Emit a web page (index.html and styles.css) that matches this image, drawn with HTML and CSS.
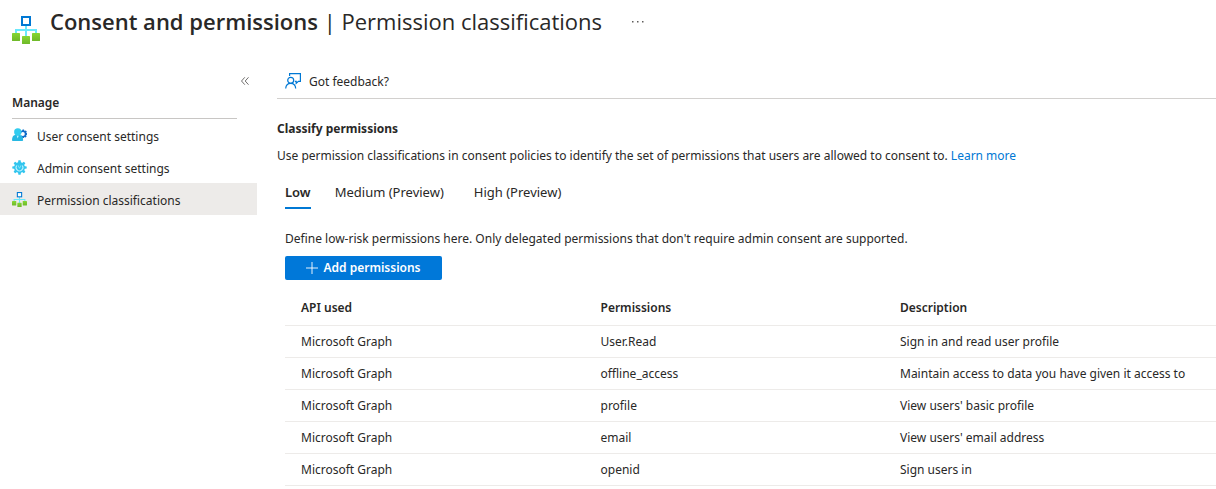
FILE: index.html
```html
<!DOCTYPE html>
<html lang="en">
<head>
<meta charset="utf-8">
<meta name="viewport" content="width=device-width, initial-scale=1">
<title>Consent and permissions | Permission classifications</title>
<link rel="stylesheet" href="styles.css">
</head>
<body>
<svg class="defs" aria-hidden="true">
  <defs>
    <linearGradient id="leaf" x1="0" y1="0" x2="0" y2="1">
      <stop offset="0" stop-color="#86d633"/><stop offset="1" stop-color="#6fb92a"/>
    </linearGradient>
    <symbol id="hierarchy" viewBox="0 0 28 28">
      <path d="M14 9v13M4 18v-4h20v4" fill="none" stroke="#6ae8fb" stroke-width="2"/>
      <rect x="10" y="1" width="8" height="8" fill="#fff" stroke="#0078d4" stroke-width="2"/>
      <rect x="0" y="17" width="8" height="8" rx="0.6" fill="url(#leaf)"/>
      <rect x="10" y="20" width="8" height="8" rx="0.6" fill="url(#leaf)"/>
      <rect x="20" y="17" width="8" height="8" rx="0.6" fill="url(#leaf)"/>
    </symbol>
  </defs>
</svg>

<header class="page-header">
  <svg class="page-icon" aria-hidden="true"><use href="#hierarchy"/></svg>
  <h1 class="page-title"><span class="page-name">Consent and permissions</span> | Permission classifications</h1>
  <button class="more" type="button" aria-label="More options">
    <svg width="12" height="2" viewBox="0 0 12 2" aria-hidden="true"><path d="M0 0h1.500v1.500H0zM5 0h1.500v1.500H5zM10 0h1.500v1.500H10z" fill="#605e5c"/></svg>
  </button>
</header>

<div class="layout">
  <nav class="sidebar" aria-label="Manage">
    <button class="collapse" type="button" aria-label="Collapse menu">
      <svg width="8" height="8" viewBox="0 0 8 8" aria-hidden="true"><path d="M3.800.3L.5 4l3.300 3.700M7.500.3L4.200 4l3.300 3.700" fill="none" stroke="#605e5c" stroke-width="0.900"/></svg>
    </button>
    <h2 class="menu-title">Manage</h2>
    <ul class="menu">
      <li><a class="menu-item" href="#user">
        <svg class="menu-icon" viewBox="0 0 15 15" aria-hidden="true">
          <path d="M8.500 2.700l1.500.1.600-1.200h1.400l.5 1.300 1.300-.4 1 1-.6 1.200 1.100.6v1.300l-1.200.6.5 1.300-1 .9-1.200-.5-.6 1.200h-1.400l-1-2z" fill="#0f6cc9"/>
          <circle cx="10.800" cy="5.900" r="2" fill="#fff"/>
          <path d="M0 11.900C.2 9.500.9 7.300 3 7.100h5c2.100.2 3 2.300 3.100 4.800 0 .8-.5 1.100-1.200 1.100H1.200C.4 13 0 12.600 0 11.900z" fill="#27b8e2"/>
          <circle cx="5.800" cy="4" r="3.700" fill="#32ccef"/>
          <path d="M4.700 7.700h2L5.700 10.600z" fill="#b8f1ff"/>
        </svg>
        User consent settings</a></li>
      <li><a class="menu-item" href="#admin">
        <svg class="menu-icon" viewBox="0 0 15 15" aria-hidden="true">
          <g fill="#32c5ee">
            <circle cx="7.500" cy="7.500" r="5.400"/>
            <path d="M6.400.3h2.200l.5 3H5.900zM6.400 14.700h2.200l.5-3H5.900zM.3 6.400v2.200l3 .5V5.900zM14.700 6.400v2.200l-3 .5V5.900z"/>
            <path d="M6.400.3h2.200l.5 3H5.900zM6.400 14.700h2.200l.5-3H5.900zM.3 6.400v2.200l3 .5V5.900zM14.700 6.400v2.200l-3 .5V5.900z" transform="rotate(45 7.500 7.500)"/>
          </g>
          <path d="M4.700 5.500a3.400 3.400 0 1 0 5.600 0" fill="none" stroke="#b7f0ff" stroke-width="1.100"/>
          <path d="M6 5.300l1.500 3 1.500-3" fill="none" stroke="#7de3fa"/>
        </svg>
        Admin consent settings</a></li>
      <li><a class="menu-item menu-item-selected" href="#classifications" aria-current="page">
        <svg class="menu-icon" aria-hidden="true"><use href="#hierarchy"/></svg>
        Permission classifications</a></li>
    </ul>
  </nav>

  <main class="content">
    <div class="toolbar">
      <button class="feedback" type="button">
        <svg width="17" height="17" viewBox="0 0 17 17" aria-hidden="true">
          <g fill="none" stroke="#0078d4" stroke-width="1.200">
            <path d="M4.600 3V.6H15.400v7.800h-2l-2.200 2V8.400H9.800"/>
            <circle cx="5.700" cy="7.300" r="3"/>
            <path d="M.7 15.500c.2-3.200 2.200-5.200 5-5.200s4.800 2 5 5.200"/>
          </g>
        </svg>
        Got feedback?
      </button>
    </div>

    <h2 class="section-title">Classify permissions</h2>
    <p class="intro">Use permission classifications in consent policies to identify the set of permissions that users are allowed to consent to. <a class="link" href="#learn">Learn more</a></p>

    <div class="panel">
      <div class="tabs" role="tablist">
        <button class="tab tab-active" type="button" role="tab" aria-selected="true">Low</button>
        <button class="tab" type="button" role="tab" aria-selected="false">Medium (Preview)</button>
        <button class="tab" type="button" role="tab" aria-selected="false">High (Preview)</button>
      </div>
      <p class="hint">Define low-risk permissions here. Only delegated permissions that don't require admin consent are supported.</p>
      <button class="add" type="button">
        <svg width="12" height="12" viewBox="0 0 12 12" aria-hidden="true"><path d="M6 0v12M0 6h12" stroke="#fff" stroke-width="0.900"/></svg>
        Add permissions
      </button>
      <table class="grid">
        <thead>
          <tr><th scope="col">API used</th><th scope="col">Permissions</th><th class="wide" scope="col">Description</th></tr>
        </thead>
        <tbody>
          <tr><td>Microsoft Graph</td><td>User.Read</td><td>Sign in and read user profile</td></tr>
          <tr><td>Microsoft Graph</td><td>offline_access</td><td>Maintain access to data you have given it access to</td></tr>
          <tr><td>Microsoft Graph</td><td>profile</td><td>View users' basic profile</td></tr>
          <tr><td>Microsoft Graph</td><td>email</td><td>View users' email address</td></tr>
          <tr><td>Microsoft Graph</td><td>openid</td><td>Sign users in</td></tr>
        </tbody>
      </table>
    </div>
  </main>
</div>
</body>
</html>
```
FILE: styles.css
```css
* {
  box-sizing: border-box;
}

body {
  margin: 0;
  background: #fff;
  color: #292827;
  font: 12px/20px "Segoe UI", "Noto Sans", "Open Sans", sans-serif;
}

h1, h2, p, ul {
  margin: 0;
  padding: 0;
}

button {
  border: 0;
  padding: 0;
  background: none;
  color: inherit;
  font: inherit;
  cursor: pointer;
}

.defs {
  position: absolute;
  width: 0;
  height: 0;
}

.page-header {
  display: flex;
  align-items: flex-start;
  padding: 5px 12px 0;
  height: 64px;
}

.page-icon {
  width: 28px;
  height: 28px;
  margin: 11px 10px 0 0;
}

.page-title {
  font-family: "Segoe UI", "Open Sans", sans-serif;
  font-size: 22px;
  line-height: 32px;
  font-weight: 400;
}

.page-name {
  font-weight: 600;
}

.more {
  display: flex;
  align-items: center;
  height: 34px;
  margin-left: 30px;
}

.layout {
  display: grid;
  grid-template-columns: 257px minmax(0, 1fr);
  column-gap: 20px;
}

.sidebar {
  display: flex;
  flex-direction: column;
}

.collapse {
  display: flex;
  align-self: flex-end;
  align-items: center;
  height: 29px;
  padding: 5px 8px 0 0;
}

.menu-title {
  margin: 0 20px 0 12px;
  padding-bottom: 5px;
  border-bottom: 1px solid #c8c6c4;
  font-size: 12px;
  font-weight: 600;
}

.menu {
  list-style: none;
}

.menu-item {
  display: flex;
  align-items: center;
  gap: 10px;
  height: 32px;
  padding: 3px 12px 0;
  color: inherit;
  text-decoration: none;
}

.menu-item-selected {
  background: #edebe9;
}

.menu-icon {
  width: 15px;
  height: 15px;
  margin-bottom: 2px;
}

.toolbar {
  display: flex;
  height: 35px;
  padding: 2px 0 0 8px;
  border-bottom: 1px solid #d2d0ce;
}

.feedback {
  display: flex;
  align-items: center;
  gap: 7px;
}

.feedback svg {
  margin-bottom: 2px;
}

.section-title {
  margin-top: 20px;
  font-size: 12px;
  font-weight: 700;
}

.intro {
  margin-top: 7px;
}

.link {
  color: #0078d4;
  text-decoration: none;
}

.panel {
  padding-left: 8px;
}

.tabs {
  display: flex;
  gap: 24px;
  margin-top: 11px;
}

.tab {
  height: 32px;
  padding-right: 6px;
  border-bottom: 2px solid transparent;
  font-size: 13px;
}

.tab-active {
  padding-right: 0;
  border-color: #0078d4;
  font-weight: 600;
}

.hint {
  margin-top: 20px;
}

.add {
  display: flex;
  align-items: center;
  justify-content: center;
  gap: 5px;
  width: 157px;
  height: 24px;
  margin-top: 7px;
  border-radius: 2px;
  background: #0078d9;
  color: #fff;
  font-weight: 600;
}

.grid {
  width: 100%;
  margin-top: 10px;
  border-collapse: separate;
  border-spacing: 0;
  table-layout: fixed;
}

.grid th,
.grid td {
  height: 32px;
  padding: 0 16px;
  border-bottom: 1px solid #edebe9;
  text-align: left;
  font-weight: 400;
  white-space: nowrap;
}

.grid th {
  height: 36px;
  font-weight: 600;
}

.grid .wide {
  width: 332px;
}
```
